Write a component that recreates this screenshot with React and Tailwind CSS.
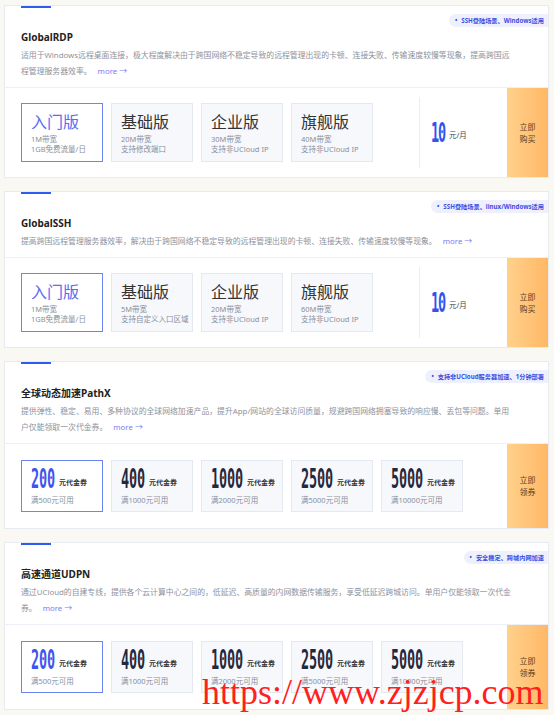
import React from 'react'

const PLAN_CARDS = [
  {
    title: 'GlobalRDP',
    badge: 'SSH登陆场景、Windows适用',
    lines: [
      '适用于Windows远程桌面连接，极大程度解决由于跨国网络不稳定导致的远程管理出现的卡顿、连接失败、传输速度较慢等现象，提高跨国远',
      '程管理服务器效率。',
    ],
    plans: [
      { name: '入门版', a: '1M带宽', b: '1GB免费流量/日' },
      { name: '基础版', a: '20M带宽', b: '支持修改端口' },
      { name: '企业版', a: '30M带宽', b: '支持非UCloud IP' },
      { name: '旗舰版', a: '40M带宽', b: '支持非UCloud IP' },
    ],
    btn: ['立即', '购买'],
  },
  {
    title: 'GlobalSSH',
    badge: 'SSH登陆场景、linux/Windows适用',
    lines: ['提高跨国远程管理服务器效率，解决由于跨国网络不稳定导致的远程管理出现的卡顿、连接失败、传输速度较慢等现象。'],
    plans: [
      { name: '入门版', a: '1M带宽', b: '1GB免费流量/日' },
      { name: '基础版', a: '5M带宽', b: '支持自定义入口区域' },
      { name: '企业版', a: '20M带宽', b: '支持非UCloud IP' },
      { name: '旗舰版', a: '60M带宽', b: '支持非UCloud IP' },
    ],
    btn: ['立即', '购买'],
  },
]

const VOUCHERS = [
  { v: '200', min: '满500元可用' },
  { v: '400', min: '满1000元可用' },
  { v: '1000', min: '满2000元可用' },
  { v: '2500', min: '满5000元可用' },
  { v: '5000', min: '满10000元可用' },
]

const VOUCHER_CARDS = [
  {
    title: '全球动态加速PathX',
    badge: '支持非UCloud服务器加速、1分钟部署',
    lines: [
      '提供弹性、稳定、易用、多种协议的全球网络加速产品，提升App/网站的全球访问质量，规避跨国网络拥塞导致的响应慢、丢包等问题。单用',
      '户仅能领取一次代金券。',
    ],
    btn: ['立即', '领券'],
  },
  {
    title: '高速通道UDPN',
    badge: '安全稳定、跨城内网加速',
    lines: [
      '通过UCloud的自建专线，提供各个云计算中心之间的，低延迟、高质量的内网数据传输服务，享受低延迟跨城访问。单用户仅能领取一次代金',
      '券。',
    ],
    btn: ['立即', '领券'],
  },
]

function Digits({ value, color, slot = 'w-[8px]' }) {
  return (
    <span className={`inline-flex font-['DejaVu_Sans_Mono',monospace] font-bold text-[27px] leading-[22px] ${color}`}>
      {value.split('').map((d, i) => (
        <span key={i} className={`inline-block ${slot}`}>
          <span className="inline-block origin-left scale-x-50">{d}</span>
        </span>
      ))}
    </span>
  )
}

function CardTop({ title, badge, lines }) {
  return (
    <div className="relative px-[16px] pb-[8px]">
      <div className="h-[2px] w-[30px] bg-[#2e5bf0]" />
      <p className="mt-[21px] text-[10px] leading-[16px] font-bold text-[#222]">{title}</p>
      <div className="mt-[2px] text-[7.85px] leading-[16px] text-[#8d929c] whitespace-nowrap">
        {lines.map((l, i) => (
          <div key={i}>
            {l}
            {i === lines.length - 1 && <span className="ml-[6px] text-[#7b7cf2]">more →</span>}
          </div>
        ))}
      </div>
      {/* badge */}
      <div className="absolute right-0 top-[8px] h-[13px] flex items-center gap-[4px] rounded-l-full bg-[#eef1fd] pl-[6px] pr-[4px] text-[6.2px] font-bold text-[#3b4ee0]">
        <span>•</span>
        <span>{badge}</span>
      </div>
    </div>
  )
}

function BuyButton({ btn }) {
  return (
    <div className="w-[41px] bg-gradient-to-r from-[#ffd18c] to-[#ffb865] flex flex-col items-center justify-center text-[8px] leading-[12px] text-[#5a3d1e]">
      <span>{btn[0]}</span>
      <span>{btn[1]}</span>
    </div>
  )
}

function PlanCard({ card }) {
  return (
    <div className="w-[545px] mx-[4px] bg-white border border-[#e8eaf1]">
      <CardTop {...card} />
      <div className="flex border-t border-[#eef0f7]">
        <div className="flex gap-[8px] py-[15px] pl-[16px]">
          {card.plans.map((p, i) => (
            <div
              key={p.name}
              className={`w-[82px] h-[59px] pt-[8px] pl-[9px] border ${
                i === 0 ? 'border-[#6d85f3] bg-white' : 'border-[#e4e8f1] bg-[#f7f8fc]'
              }`}
            >
              <p className={`text-[16px] leading-[20px] ${i === 0 ? 'text-[#5a6cf2]' : 'text-[#333]'}`}>{p.name}</p>
              <p className="mt-[2px] text-[7.5px] leading-[10px] text-[#8a8f99]">{p.a}</p>
              <p className="text-[7.5px] leading-[10px] text-[#8a8f99] whitespace-nowrap">{p.b}</p>
            </div>
          ))}
        </div>
        <div className="flex items-center ml-[46px] my-[9px] border-l border-[#e9edf7] pl-[11px]">
          <div className="flex items-end">
            <Digits value="10" color="text-[#3552ee]" slot="w-[7px]" />
            <span className="ml-[4px] mb-[2px] text-[7.5px] text-[#444]">元/月</span>
          </div>
        </div>
        <div className="flex-1" />
        <BuyButton btn={card.btn} />
      </div>
    </div>
  )
}

function VoucherCard({ card }) {
  return (
    <div className="w-[545px] mx-[4px] bg-white border border-[#e8eaf1]">
      <CardTop {...card} />
      <div className="flex border-t border-[#eef0f7]">
        <div className="flex gap-[8px] py-[16px] pl-[16px]">
          {VOUCHERS.map((v, i) => (
            <div
              key={v.v}
              className={`w-[82px] h-[52px] pt-[7px] pl-[9px] border ${
                i === 0 ? 'border-[#6d85f3] bg-white' : 'border-[#e4e8f1] bg-[#f7f8fc]'
              }`}
            >
              <div className="flex items-end">
                <Digits value={v.v} color={i === 0 ? 'text-[#3d55f0]' : 'text-[#1f2940]'} />
                <span className="ml-[4px] mb-[2px] text-[7px] font-bold text-[#333]">元代金券</span>
              </div>
              <p className="mt-[4px] text-[7.5px] leading-[12px] text-[#8a8f99]">{v.min}</p>
            </div>
          ))}
        </div>
        <div className="flex-1" />
        <BuyButton btn={card.btn} />
      </div>
    </div>
  )
}

export default function App() {
  return (
    <div className="relative w-[554px] h-[715px] overflow-hidden bg-[#faf8f3] pt-[5px] font-['Noto_Sans','Noto_Sans_CJK_SC',sans-serif]">
      <div className="flex flex-col gap-[13px]">
        {PLAN_CARDS.map((c) => (
          <PlanCard key={c.title} card={c} />
        ))}
        {VOUCHER_CARDS.map((c) => (
          <VoucherCard key={c.title} card={c} />
        ))}
      </div>

      {/* watermark */}
      <div className="absolute left-[202px] top-[672px] text-[36px] leading-[40px] text-[#ff1f1f] font-['Liberation_Serif',serif] whitespace-nowrap">
        https://www.zjzjcp.com
      </div>
    </div>
  )
}
